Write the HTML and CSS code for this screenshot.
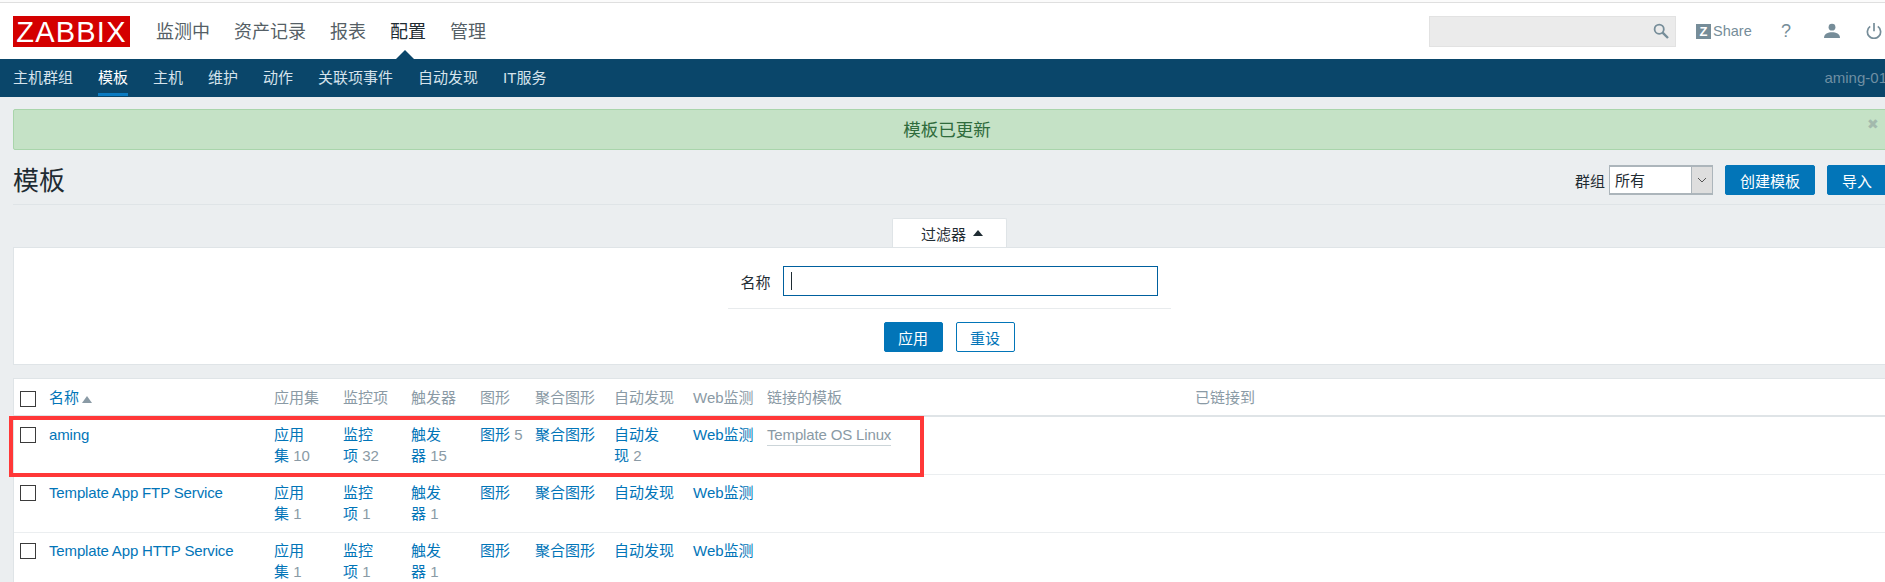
FILE: index.html
```html
<!DOCTYPE html>
<html lang="zh-CN">
<head>
<meta charset="utf-8">
<title>模板</title>
<link rel="stylesheet" href="styles.css">
</head>
<body>
<div class="page">
  <div class="strip"></div>
  <header class="top">
    <div class="logo">ZABBIX</div>
    <nav class="menu">
      <a>监测中</a><a>资产记录</a><a>报表</a><a class="on">配置</a><a>管理</a>
    </nav>
    <div class="tools">
      <div class="search">
        <svg class="search-icon" viewBox="0 0 16 16" width="16" height="16"><circle cx="6.2" cy="6.2" r="4.6" fill="none" stroke="#768d99" stroke-width="1.8"/><path d="M9.6 9.6 L15 15" stroke="#768d99" stroke-width="2.4" fill="none"/></svg>
      </div>
      <a class="share"><span class="z">Z</span>Share</a>
      <a class="help">?</a>
      <svg class="user" viewBox="0 0 16 16" width="16" height="16"><circle cx="8" cy="4.2" r="3.4" fill="#768d99"/><path d="M0 15 C0 10.5 4 9.2 8 9.2 C12 9.2 16 10.5 16 15 Z" fill="#768d99"/></svg>
      <svg class="power" viewBox="0 0 16 16" width="16" height="16"><path d="M4.2 3.4 A6.6 6.6 0 1 0 11.8 3.4" fill="none" stroke="#768d99" stroke-width="1.7"/><path d="M8 0 V8.2" stroke="#768d99" stroke-width="1.7" fill="none"/></svg>
    </div>
  </header>
  <nav class="subnav">
    <a>主机群组</a><a class="on">模板</a><a>主机</a><a>维护</a><a>动作</a><a>关联项事件</a><a>自动发现</a><a>IT服务</a>
    <span class="server">aming-01</span>
  </nav>
  <main class="content">
    <div class="msg">模板已更新<span class="close">✖</span></div>
    <div class="head">
      <h1>模板</h1>
      <div class="controls">
        <span class="lbl">群组</span>
        <div class="select"><span class="sel-val">所有</span><span class="sel-arrow"><svg viewBox="0 0 10 6" width="10" height="6"><path d="M1 1 L5 5 L9 1" fill="none" stroke="#555" stroke-width="1"/></svg></span></div>
        <button class="btn">创建模板</button>
        <button class="btn">导入</button>
      </div>
    </div>
    <div class="tabbar"><div class="tab">过滤器<i class="up"></i></div></div>
    <section class="filter">
      <div class="form">
        <div class="row"><label>名称</label><div class="field"><span class="caret"></span></div></div>
        <div class="actions"><button class="btn wide">应用</button><button class="btn ghost wide">重设</button></div>
      </div>
    </section>
    <div class="list">
      <table>
        <thead>
          <tr>
            <th class="c0"><span class="cb hd"></span></th>
            <th class="c1"><a>名称</a><i class="sort"></i></th>
            <th class="c2">应用集</th><th class="c3">监控项</th><th class="c4">触发器</th><th class="c5">图形</th><th class="c6">聚合图形</th><th class="c7">自动发现</th><th class="c8">Web监测</th><th class="c9">链接的模板</th><th>已链接到</th>
          </tr>
        </thead>
        <tbody>
          <tr>
            <td><span class="cb"></span></td><td><a class="en">aming</a></td>
            <td><a>应用<br>集</a> <em>10</em></td><td><a>监控<br>项</a> <em>32</em></td><td><a>触发<br>器</a> <em>15</em></td>
            <td><a>图形</a> <em>5</em></td><td><a>聚合图形</a></td><td><a>自动发<br>现</a> <em>2</em></td><td><a>Web监测</a></td>
            <td><a class="tpl en">Template OS Linux</a></td><td></td>
          </tr>
          <tr>
            <td><span class="cb"></span></td><td><a class="en">Template App FTP Service</a></td>
            <td><a>应用<br>集</a> <em>1</em></td><td><a>监控<br>项</a> <em>1</em></td><td><a>触发<br>器</a> <em>1</em></td>
            <td><a>图形</a></td><td><a>聚合图形</a></td><td><a>自动发现</a></td><td><a>Web监测</a></td><td></td><td></td>
          </tr>
          <tr>
            <td><span class="cb"></span></td><td><a class="en">Template App HTTP Service</a></td>
            <td><a>应用<br>集</a> <em>1</em></td><td><a>监控<br>项</a> <em>1</em></td><td><a>触发<br>器</a> <em>1</em></td>
            <td><a>图形</a></td><td><a>聚合图形</a></td><td><a>自动发现</a></td><td><a>Web监测</a></td><td></td><td></td>
          </tr>
        </tbody>
      </table>
      <div class="mark"></div>
    </div>
  </main>
</div>
</body>
</html>
```
FILE: styles.css
```css
* { box-sizing: border-box; }
html, body { margin: 0; padding: 0; height: 582px; overflow: hidden; background: #ebeef0; }
body { font-family: "Liberation Sans", "Noto Sans CJK SC", sans-serif; font-size: 15px; color: #1f2c33; }
.page { width: 1900px; }
.strip { height: 3px; background: #fbfbfb; border-bottom: 1px solid #dfdfdf; }
a { color: #0275b8; text-decoration: none; }

.top { height: 56px; background: #fff; display: flex; align-items: center; padding-left: 13px; }
.logo { width: 117px; height: 31px; background: #d40000; color: #fff; font-size: 29px; line-height: 32px; text-align: center; letter-spacing: 1.2px; }
.menu { display: flex; gap: 24px; margin-left: 26px; margin-bottom: 2px; font-size: 18px; }
.menu a { color: #555f66; }
.menu a.on { color: #1f2c33; }
.tools { margin-left: auto; display: flex; align-items: center; width: 471px; color: #768d99; }
.search { width: 247px; height: 31px; background: #ebebeb; border: 1px solid #e2e2e2; display: flex; align-items: center; justify-content: flex-end; padding-right: 6px; }
.share { display: flex; align-items: center; margin-left: 20px; width: 55px; font-size: 14.5px; color: #768d99; }
.z { width: 15px; height: 15px; background: #768d99; color: #fff; font-size: 13px; font-weight: bold; line-height: 15px; text-align: center; margin-right: 2px; flex: none; }
.help { margin-left: 30px; font-size: 18px; width: 10px; color: #768d99; }
.user { margin-left: 33px; }
.power { margin-left: 26px; }

.subnav { height: 38px; background: #0a466a; display: flex; gap: 25px; padding: 0 13px; color: #d5e3ec; line-height: 38px; position: relative; }
.subnav a { height: 37px; border-bottom: 3px solid transparent; color: inherit; }
.subnav a.on { color: #fff; border-bottom-color: #0a7bc2; }
.server { margin-left: auto; color: #6f8fa3; }
.subnav::before { content: ""; position: absolute; left: 396px; top: -9px; border-left: 9px solid transparent; border-right: 9px solid transparent; border-bottom: 9px solid #0a466a; }

.content { padding: 12px 13px 0; }
.msg { height: 41px; background: #c5e2c6; border: 1px solid #a9d5ab; border-radius: 2px; color: #2f6b3c; font-size: 17.5px; line-height: 41px; text-align: center; padding-right: 6px; position: relative; }
.close { position: absolute; right: 7px; top: 6px; font-size: 14px; line-height: 16px; color: #a3b9ad; }

.head { display: flex; align-items: center; justify-content: space-between; height: 55px; border-bottom: 1px solid #dfe4e7; padding-top: 8px; }
h1 { margin: 0; font-size: 26px; font-weight: normal; line-height: 34px; }
.controls { display: flex; align-items: center; margin-top: -2px; }
.lbl { margin-right: 4px; }
.select { width: 104px; height: 30px; border: 2px solid #acb5bb; border-right-width: 1px; border-left-width: 1px; background: #fff; display: flex; margin-right: 12px; }
.sel-val { flex: 1; padding-left: 5px; line-height: 27px; }
.sel-arrow { width: 21px; background: #dedede; border-left: 1px solid #acb5bb; display: flex; align-items: center; justify-content: center; }
.btn { height: 30px; padding: 0 14px; border: 1px solid #0275b8; border-radius: 2px; background: #0275b8; color: #fff; font: inherit; }
.controls .btn + .btn { margin-left: 12px; }

.tabbar { display: flex; justify-content: center; padding: 13px 1px 0 0; }
.tab { width: 115px; height: 29px; background: #fff; border: 1px solid #dfe4e7; border-bottom: 0; border-radius: 2px 2px 0 0; display: flex; align-items: center; justify-content: center; gap: 7px; padding-left: 5px; }
.up { border-left: 5px solid transparent; border-right: 5px solid transparent; border-bottom: 6px solid #1f2c33; }
.filter { height: 118px; background: #fff; border: 1px solid #dfe4e7; padding: 18px 2px 0 0; display: flex; justify-content: center; }
.form { width: 443px; }
.row { display: flex; align-items: center; gap: 12px; padding: 0 0 12px 13px; border-bottom: 1px solid #e8ebed; box-sizing: content-box; height: 30px; }
.field { width: 375px; height: 30px; border: 1px solid #00609e; padding: 5px 7px; background: #fff; }
.caret { display: block; width: 1px; height: 18px; background: #1f2c33; }
.actions { display: flex; justify-content: center; gap: 13px; padding-top: 13px; }
.wide { width: 59px; padding: 0; }
.ghost { background: #fff; color: #0275b8; }

.list { margin-top: 13px; background: #fff; border: 1px solid #dfe4e7; border-bottom: 0; position: relative; }
table { width: 100%; border-collapse: collapse; table-layout: fixed; }
th { font-weight: normal; text-align: left; color: #8a9aa5; padding: 7px 6px; line-height: 21px; border-bottom: 2px solid #dfe4e7; height: 37px; }
td { vertical-align: top; padding: 7px 6px 8px; line-height: 21px; border-bottom: 1px solid #ebeef0; height: 58px; }
em { font-style: normal; color: #8a9aa5; }
.en { letter-spacing: -0.15px; }
.tpl { color: #8a9aa5; display: inline-block; line-height: 20px; border-bottom: 1px solid #ccd5d9; }
.c0 { width: 29px; } .c1 { width: 225px; } .c2 { width: 69px; } .c3 { width: 68px; } .c4 { width: 69px; }
.c5 { width: 55px; } .c6 { width: 79px; } .c7 { width: 79px; } .c8 { width: 74px; } .c9 { width: 428px; }
.cb { display: block; width: 16px; height: 16px; border: 1px solid #3b3b3b; background: #fff; margin-top: 3px; }
.sort { display: inline-block; margin-left: 3px; border-left: 5px solid transparent; border-right: 5px solid transparent; border-bottom: 7px solid #8a9aa5; }
.mark { position: absolute; left: -5px; top: 37px; width: 915px; height: 61px; border: 4px solid #ff3838; pointer-events: none; }
```
